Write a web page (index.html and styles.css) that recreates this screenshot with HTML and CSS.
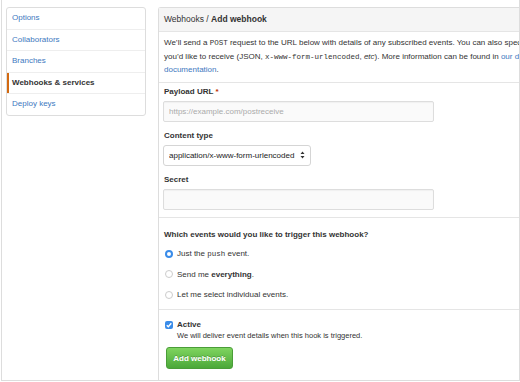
FILE: index.html
```html
<!DOCTYPE html>
<html lang="en">
<head>
    <meta charset="UTF-8">
    <meta name="viewport" content="width=device-width, initial-scale=1.0">
    <title>Add webhook</title>
    <link rel="stylesheet" href="styles.css">
</head>
<body>

    <div class="frame">
        <nav class="menu">
            <a href="#" class="menu-item">Options</a>
            <a href="#" class="menu-item">Collaborators</a>
            <a href="#" class="menu-item">Branches</a>
            <a href="#" class="menu-item selected">Webhooks &amp; services</a>
            <a href="#" class="menu-item">Deploy keys</a>
        </nav>

        <div class="panel">
            <div class="panel-title">Webhooks / <strong>Add webhook</strong></div>

            <div class="section intro">
                <p>We’ll send a <code>POST</code> request to the URL below with details of any subscribed events. You can also specify which data format you’d like to receive (JSON, <code>x-www-form-urlencoded</code>, <em>etc</em>). More information can be found in <a href="#">our developer documentation</a>.</p>
            </div>

            <form class="section fields">
                <div class="form-group">
                    <label for="url">Payload URL <span class="required">*</span></label>
                    <input type="text" id="url" class="input" placeholder="https://example.com/postreceive">
                </div>

                <div class="form-group">
                    <label for="ctype">Content type</label>
                    <span class="select-wrap">
                        <select id="ctype" class="select">
                            <option>application/x-www-form-urlencoded</option>
                            <option>application/json</option>
                        </select>
                        <svg class="select-arrows" width="5" height="8" viewBox="0 0 5 8">
                            <path d="M2.5 0.5 L4.5 3 H0.5 Z M2.5 7.5 L4.5 5 H0.5 Z" fill="#333"/>
                        </svg>
                    </span>
                </div>

                <div class="form-group">
                    <label for="secret">Secret</label>
                    <input type="text" id="secret" class="input">
                </div>
            </form>

            <div class="section events">
                <h3>Which events would you like to trigger this webhook?</h3>
                <label class="choice">
                    <input type="radio" name="events" checked>
                    <span>Just the <code>push</code> event.</span>
                </label>
                <label class="choice">
                    <input type="radio" name="events">
                    <span>Send me <strong>everything</strong>.</span>
                </label>
                <label class="choice">
                    <input type="radio" name="events">
                    <span>Let me select individual events.</span>
                </label>
            </div>

            <div class="section actions">
                <div class="check">
                    <span class="checkbox">
                        <svg width="8" height="8" viewBox="0 0 8 8">
                            <path d="M1.8 4.2 L3.3 5.7 L6.3 2.3" fill="none" stroke="#fff" stroke-width="1.4"/>
                        </svg>
                    </span>
                    <div>
                        <strong>Active</strong>
                        <p class="note">We will deliver event details when this hook is triggered.</p>
                    </div>
                </div>
                <button type="submit" class="btn">Add webhook</button>
            </div>
        </div>
    </div>

</body>
</html>
```

FILE: styles.css
```css
body {
    font-family: "Liberation Sans", Arial, sans-serif;
    font-size: 8px;
    color: #333;
    margin: 0;
    padding: 0;
    background: #fff;
}

.frame {
    display: flex;
    gap: 12px;
    height: 381px;
    margin-left: 1px;
    padding: 7px 0 0 4px;
    border: 1px solid #ddd;
    border-top: none;
    box-sizing: border-box;
    overflow: hidden;
}

/* settings menu */

.menu {
    flex: none;
    align-self: flex-start;
    display: flex;
    flex-direction: column;
    width: 140px;
    border: 1px solid #ddd;
    border-radius: 3px;
    box-sizing: border-box;
}

.menu-item {
    display: block;
    height: 20.5px;
    line-height: 20.5px;
    padding-left: 5px;
    color: #4078c0;
    text-decoration: none;
    border-bottom: 1px solid #eee;
}

.menu-item:last-child {
    border-bottom: none;
}

.menu-item.selected {
    color: #333;
    font-weight: bold;
    box-shadow: inset 2px 0 0 #d26911;
}

/* main panel */

.panel {
    flex: 1;
    min-width: 0;
    display: flex;
    flex-direction: column;
    border-left: 1px solid #ddd;
    border-top: 1px solid #ddd;
    border-top-left-radius: 3px;
}

.panel-title {
    height: 23px;
    line-height: 23px;
    padding-left: 5px;
    font-size: 8.5px;
    background: #f5f5f5;
    border-bottom: 1px solid #e5e5e5;
}

.section {
    padding: 0 5px;
    border-bottom: 1px solid #e5e5e5;
}

.section:last-child {
    border-bottom: none;
}

code {
    font-family: "Liberation Mono", monospace;
    font-size: 7.5px;
    line-height: 1;
}

a {
    color: #4078c0;
    text-decoration: none;
}

.intro {
    padding-top: 4px;
    padding-bottom: 5px;
}

.intro p {
    width: 436px;
    margin: 0;
    line-height: 13.5px;
}

.fields {
    padding-top: 3px;
    padding-bottom: 7px;
}

.form-group {
    margin-bottom: 8px;
}

.form-group:last-child {
    margin-bottom: 0;
}

.form-group label {
    display: block;
    font-weight: bold;
    line-height: 12px;
    margin-bottom: 3px;
}

.required {
    color: #bd2c00;
}

.input {
    display: block;
    width: 271px;
    height: 21px;
    margin-left: -1px;
    padding: 0 5px;
    font-family: inherit;
    font-size: 8px;
    color: #333;
    background: #fafafa;
    border: 1px solid #ddd;
    border-radius: 2px;
    box-shadow: inset 0 1px 1px rgba(0, 0, 0, 0.04);
    box-sizing: border-box;
    outline: none;
}

.input::placeholder {
    color: #aaa;
}

.select-wrap {
    position: relative;
    display: inline-block;
    margin-left: -1px;
}

.select {
    appearance: none;
    display: block;
    width: 148px;
    height: 21px;
    padding: 0 12px 0 5px;
    font-family: inherit;
    font-size: 8px;
    color: #222;
    background: #fff;
    border: 1px solid #d5d5d5;
    border-radius: 3px;
    box-sizing: border-box;
}

.select-arrows {
    position: absolute;
    right: 6px;
    top: 6.5px;
}

.events {
    padding-top: 11px;
    padding-bottom: 4px;
}

.events h3 {
    margin: 0 0 3px;
    font-size: 8px;
    line-height: 12px;
}

.choice {
    display: flex;
    align-items: center;
    gap: 4px;
    height: 20.5px;
    padding-left: 1px;
}

.choice input {
    appearance: none;
    flex: none;
    width: 8px;
    height: 8px;
    margin: 0;
    border: 1px solid #ccc;
    border-radius: 50%;
    background: #fff;
    box-sizing: border-box;
}

.choice input:checked {
    border: 2.5px solid #3a8ce9;
}

.actions {
    padding-top: 9px;
}

.check {
    display: flex;
    gap: 4px;
    padding-left: 1px;
}

.checkbox {
    flex: none;
    display: flex;
    align-items: center;
    justify-content: center;
    width: 8px;
    height: 8px;
    margin-top: 2px;
    border-radius: 2px;
    background: #3a8ce9;
}

.check strong {
    display: block;
    line-height: 11px;
}

.note {
    margin: 0;
    font-size: 7.5px;
    line-height: 11px;
}

.btn {
    display: block;
    width: 67px;
    height: 22px;
    margin: 6px 0 0 2px;
    padding: 0;
    font-family: inherit;
    font-size: 8px;
    font-weight: bold;
    color: #fff;
    text-shadow: 0 -1px 0 rgba(0, 0, 0, 0.2);
    background: linear-gradient(#7fd45f, #4ba839);
    border: 1px solid #4a9d38;
    border-radius: 3px;
    cursor: pointer;
}
```
